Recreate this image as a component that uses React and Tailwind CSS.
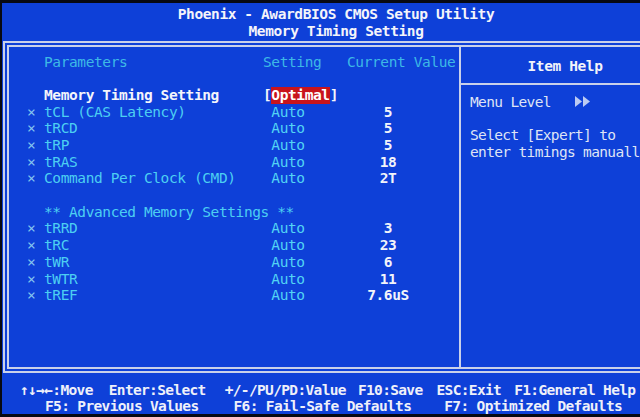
export default function App() {
  const rows1 = [
    ["tCL (CAS Latency)", "5"],
    ["tRCD", "5"],
    ["tRP", "5"],
    ["tRAS", "18"],
    ["Command Per Clock (CMD)", "2T"],
  ];
  const rows2 = [
    ["tRRD", "3"],
    ["tRC", "23"],
    ["tWR", "6"],
    ["tWTR", "11"],
    ["tREF", "7.6uS"],
  ];

  const Row = ({ label, val }) => (
    <div className="flex h-[16.7px] leading-[16.7px] whitespace-pre">
      <span className="w-[18px] shrink-0" />
      <span className="w-[17px] shrink-0 text-[#86c6ef]">×</span>
      <span className="w-[219px] shrink-0 text-[#4ccff2]">{label}</span>
      <span className="w-[80px] shrink-0 text-[#52d4f4]"> Auto</span>
      <span className="w-[90px] shrink-0 text-center font-bold text-[#f2f4fa]">{val}</span>
    </div>
  );

  return (
    <div className="w-[640px] h-[417px] overflow-hidden bg-[#070912] pt-[3px] pl-[2px] font-['DejaVu_Sans_Mono','Liberation_Mono',monospace] text-[14.5px] tracking-[-0.4px]">
      <div className="h-[411px] w-[700px] bg-[#0e40d8] flex flex-col overflow-hidden">
        {/* Title */}
        <div className="w-[638px] pt-[3px] pl-[30px] text-center font-bold text-[#f4f4fa] leading-[17px] whitespace-pre">
          <div>Phoenix - AwardBIOS CMOS Setup Utility</div>
          <div>Memory Timing Setting</div>
        </div>

        {/* Main box */}
        <div className="mt-[1px] ml-[1px] w-[672px] border-2 border-[#c9d1ea] p-[2px]">
          <div className="border-2 border-[#c9d1ea] h-[324px] flex">
            {/* Left column */}
            <div className="w-[452px] shrink-0 border-r-2 border-[#c9d1ea] pt-[6.6px]">
              <div className="flex h-[16.7px] leading-[16.7px] whitespace-pre text-[#3db9e6]">
                <span className="w-[35px] shrink-0" />
                <span className="w-[219px] shrink-0">Parameters</span>
                <span className="w-[84px] shrink-0">Setting</span>
                <span className="shrink-0">Current Value</span>
              </div>
              <div className="h-[16.7px]" />
              <div className="flex h-[16.7px] leading-[16.7px] whitespace-pre font-bold text-[#f4f5fb]">
                <span className="w-[35px] shrink-0" />
                <span className="w-[219px] shrink-0">Memory Timing Setting</span>
                <span className="w-[80px] shrink-0 flex">
                  <span>[</span>
                  <span className="bg-[#c8141c] text-white">Optimal</span>
                  <span>]</span>
                </span>
              </div>
              {rows1.map(([l, v]) => (
                <Row key={l} label={l} val={v} />
              ))}
              <div className="h-[16.7px]" />
              <div className="flex h-[16.7px] leading-[16.7px] whitespace-pre text-[#4ccff2]">
                <span className="w-[35px] shrink-0" />
                <span className="shrink-0">** Advanced Memory Settings **</span>
              </div>
              {rows2.map(([l, v]) => (
                <Row key={l} label={l} val={v} />
              ))}
            </div>

            {/* Right column */}
            <div className="flex-1 flex flex-col">
              <div className="h-[38px] border-b-2 border-[#c9d1ea] pt-[4px] flex items-center justify-center font-bold text-[#f2f4fa]">
                Item Help
              </div>
              <div className="pt-[8.65px] pl-[9px] tracking-[-0.65px] text-[#dfe4f5] whitespace-pre leading-[16.7px]">
                <div className="h-[16.7px] flex items-center">
                  <span>Menu Level   </span>
                  <svg width="16" height="11" viewBox="0 0 16 11" className="shrink-0">
                    <polygon points="0,0 7,5.5 0,11" fill="#bccbf2" />
                    <polygon points="8,0 15,5.5 8,11" fill="#bccbf2" />
                  </svg>
                </div>
                <div className="h-[16.7px]" />
                <div className="h-[16.7px]">Select [Expert] to</div>
                <div className="h-[16.7px]">enter timings manually</div>
              </div>
            </div>
          </div>
        </div>

        {/* Footer */}
        <div className="w-[638px] pt-[9px] font-bold text-[#eef0fa] tracking-[-0.65px] leading-[16px] whitespace-pre">
          <div className="flex h-[16px]">
            <span className="ml-[18px] shrink-0">↑↓→←:Move</span>
            <span className="ml-[16px] shrink-0">Enter:Select</span>
            <span className="ml-[19px] shrink-0">+/-/PU/PD:Value</span>
            <span className="ml-[12px] shrink-0">F10:Save</span>
            <span className="ml-[14px] shrink-0">ESC:Exit</span>
            <span className="ml-[13px] shrink-0">F1:General Help</span>
          </div>
          <div className="flex h-[16px]">
            <span className="ml-[43px] shrink-0">F5: Previous Values</span>
            <span className="ml-[35px] shrink-0">F6: Fail-Safe Defaults</span>
            <span className="ml-[33px] shrink-0">F7: Optimized Defaults</span>
          </div>
        </div>
      </div>
    </div>
  );
}
